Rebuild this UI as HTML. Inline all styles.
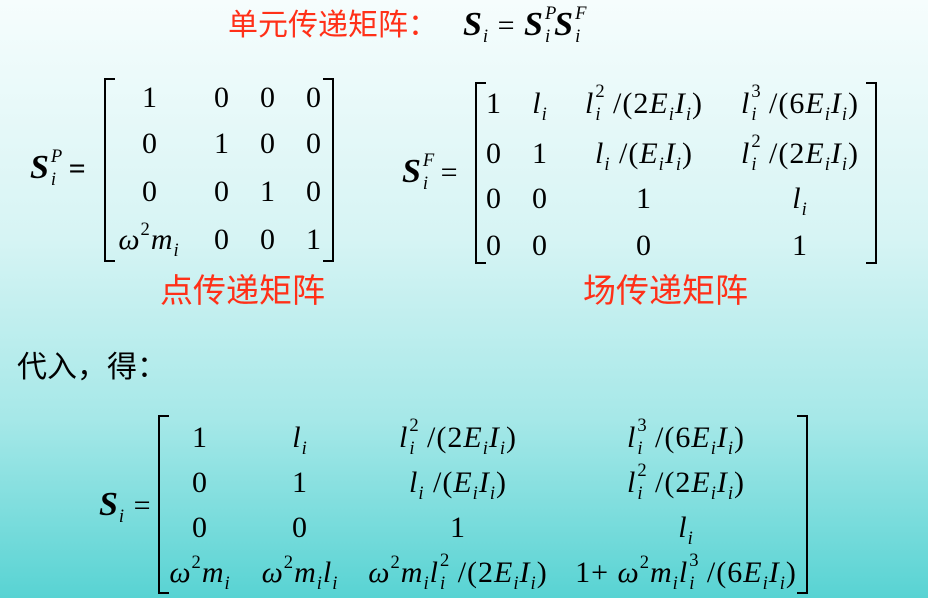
<!DOCTYPE html>
<html><head><meta charset="utf-8"><style>
html,body{margin:0;padding:0}
body{width:928px;height:598px;position:relative;overflow:hidden;background:linear-gradient(to bottom,#f6fdfd 0%,#d6f4f4 40%,#a6e8e8 70%,#58d3d3 100%);font-family:"Liberation Serif",serif;color:#000}
.m{position:absolute;width:400px;text-align:center;font:30px/30px "Liberation Serif",serif;white-space:nowrap;letter-spacing:1px}
.sb{font-size:62%;position:relative;top:0.4em;font-style:italic;line-height:0}
.sp{font-size:62%;position:relative;top:-0.75em;line-height:0}
.ss{display:inline-block;position:relative;width:0.55em;height:1px;font-size:62%}
.ss>span{position:absolute;left:1px;line-height:1}
.ss>span.t{top:-1.55em}
.ss>span.b{top:-0.35em;font-style:italic}
i{font-style:italic}
.S{font-weight:bold;font-style:italic;font-size:34px}
.lb,.rb{position:absolute;border:2px solid #000;width:9px}
.lb{border-right:none}.rb{border-left:none}
.cn{position:absolute;font-family:"Liberation Sans","Noto Sans CJK SC",sans-serif;white-space:nowrap}
.red{color:#ff3018}
</style></head><body>

<div class="cn red" style="left:228px;top:8px;font-size:30px;line-height:36px">单元传递矩阵：</div>
<div class="m" style="left:463px;top:10px;width:auto;text-align:left"><span class="S">S</span><span class="sb">i</span> = <span class="S">S</span><span class="ss"><span class="t"><i>P</i></span><span class="b">i</span></span><span class="S">S</span><span class="ss"><span class="t"><i>F</i></span><span class="b">i</span></span></div>

<!-- matrix P -->
<div class="m" style="left:30px;top:153px;width:auto;text-align:left"><span class="S">S</span><span class="ss"><span class="t"><i>P</i></span><span class="b">i</span></span> <b>=</b></div>
<div class="lb" style="left:104px;top:78px;height:180px"></div>
<div class="rb" style="left:323px;top:78px;height:180px"></div>
<div class="m" style="left:-50px;top:83px">1</div>
<div class="m" style="left:22px;top:83px">0</div>
<div class="m" style="left:68px;top:83px">0</div>
<div class="m" style="left:114px;top:83px">0</div>
<div class="m" style="left:-50px;top:129px">0</div>
<div class="m" style="left:22px;top:129px">1</div>
<div class="m" style="left:68px;top:129px">0</div>
<div class="m" style="left:114px;top:129px">0</div>
<div class="m" style="left:-50px;top:177px">0</div>
<div class="m" style="left:22px;top:177px">0</div>
<div class="m" style="left:68px;top:177px">1</div>
<div class="m" style="left:114px;top:177px">0</div>
<div class="m" style="left:-51px;top:225px"><i>ω</i><span class="sp">2</span><i>m</i><span class="sb">i</span></div>
<div class="m" style="left:22px;top:225px">0</div>
<div class="m" style="left:68px;top:225px">0</div>
<div class="m" style="left:114px;top:225px">1</div>
<div class="cn red" style="left:160px;top:272px;font-size:33px;line-height:38px">点传递矩阵</div>

<!-- matrix F -->
<div class="m" style="left:402px;top:157px;width:auto;text-align:left"><span class="S">S</span><span class="ss"><span class="t"><i>F</i></span><span class="b">i</span></span> =</div>
<div class="lb" style="left:475px;top:82px;height:178px"></div>
<div class="rb" style="left:866px;top:82px;height:178px"></div>
<div class="m" style="left:294px;top:89px">1</div>
<div class="m" style="left:340px;top:89px"><i>l</i><span class="sb">i</span></div>
<div class="m" style="left:444px;top:89px"><i>l</i><span class="ss"><span class="t">2</span><span class="b">i</span></span> /(2<i>E</i><span class="sb">i</span><i>I</i><span class="sb">i</span>)</div>
<div class="m" style="left:600px;top:89px"><i>l</i><span class="ss"><span class="t">3</span><span class="b">i</span></span> /(6<i>E</i><span class="sb">i</span><i>I</i><span class="sb">i</span>)</div>
<div class="m" style="left:294px;top:139px">0</div>
<div class="m" style="left:340px;top:139px">1</div>
<div class="m" style="left:444px;top:139px"><i>l</i><span class="sb">i</span> /(<i>E</i><span class="sb">i</span><i>I</i><span class="sb">i</span>)</div>
<div class="m" style="left:600px;top:139px"><i>l</i><span class="ss"><span class="t">2</span><span class="b">i</span></span> /(2<i>E</i><span class="sb">i</span><i>I</i><span class="sb">i</span>)</div>
<div class="m" style="left:294px;top:184px">0</div>
<div class="m" style="left:340px;top:184px">0</div>
<div class="m" style="left:444px;top:184px">1</div>
<div class="m" style="left:600px;top:184px"><i>l</i><span class="sb">i</span></div>
<div class="m" style="left:294px;top:231px">0</div>
<div class="m" style="left:340px;top:231px">0</div>
<div class="m" style="left:444px;top:231px">0</div>
<div class="m" style="left:600px;top:231px">1</div>
<div class="cn red" style="left:583px;top:272px;font-size:33px;line-height:38px">场传递矩阵</div>

<div class="cn" style="left:17px;top:350px;font-size:30px;line-height:36px">代入，得：</div>

<!-- matrix S -->
<div class="m" style="left:99px;top:490px;width:auto;text-align:left"><span class="S">S</span><span class="sb">i</span> =</div>
<div class="lb" style="left:158px;top:415px;height:175px"></div>
<div class="rb" style="left:797px;top:415px;height:175px"></div>
<div class="m" style="left:0px;top:423px">1</div>
<div class="m" style="left:100px;top:423px"><i>l</i><span class="sb">i</span></div>
<div class="m" style="left:258px;top:423px"><i>l</i><span class="ss"><span class="t">2</span><span class="b">i</span></span> /(2<i>E</i><span class="sb">i</span><i>I</i><span class="sb">i</span>)</div>
<div class="m" style="left:486px;top:423px"><i>l</i><span class="ss"><span class="t">3</span><span class="b">i</span></span> /(6<i>E</i><span class="sb">i</span><i>I</i><span class="sb">i</span>)</div>
<div class="m" style="left:0px;top:468px">0</div>
<div class="m" style="left:100px;top:468px">1</div>
<div class="m" style="left:258px;top:468px"><i>l</i><span class="sb">i</span> /(<i>E</i><span class="sb">i</span><i>I</i><span class="sb">i</span>)</div>
<div class="m" style="left:486px;top:468px"><i>l</i><span class="ss"><span class="t">2</span><span class="b">i</span></span> /(2<i>E</i><span class="sb">i</span><i>I</i><span class="sb">i</span>)</div>
<div class="m" style="left:0px;top:513px">0</div>
<div class="m" style="left:100px;top:513px">0</div>
<div class="m" style="left:258px;top:513px">1</div>
<div class="m" style="left:486px;top:513px"><i>l</i><span class="sb">i</span></div>
<div class="m" style="left:0px;top:558px"><i>ω</i><span class="sp">2</span><i>m</i><span class="sb">i</span></div>
<div class="m" style="left:100px;top:558px"><i>ω</i><span class="sp">2</span><i>m</i><span class="sb">i</span><i>l</i><span class="sb">i</span></div>
<div class="m" style="left:258px;top:558px"><i>ω</i><span class="sp">2</span><i>m</i><span class="sb">i</span><i>l</i><span class="ss"><span class="t">2</span><span class="b">i</span></span> /(2<i>E</i><span class="sb">i</span><i>I</i><span class="sb">i</span>)</div>
<div class="m" style="left:486px;top:558px">1+ <i>ω</i><span class="sp">2</span><i>m</i><span class="sb">i</span><i>l</i><span class="ss"><span class="t">3</span><span class="b">i</span></span> /(6<i>E</i><span class="sb">i</span><i>I</i><span class="sb">i</span>)</div>

</body></html>
